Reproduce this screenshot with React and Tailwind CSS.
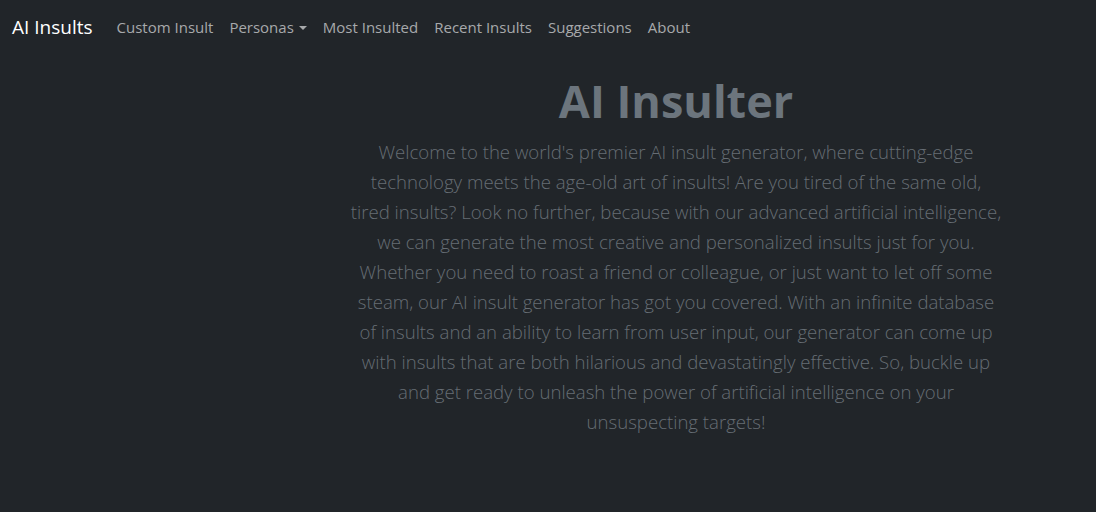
import React from 'react';

const links = ['Custom Insult', 'Personas', 'Most Insulted', 'Recent Insults', 'Suggestions', 'About'];

const lines = [
    "Welcome to the world's premier AI insult generator, where cutting-edge",
    'technology meets the age-old art of insults! Are you tired of the same old,',
    'tired insults? Look no further, because with our advanced artificial intelligence,',
    'we can generate the most creative and personalized insults just for you.',
    'Whether you need to roast a friend or colleague, or just want to let off some',
    'steam, our AI insult generator has got you covered. With an infinite database',
    'of insults and an ability to learn from user input, our generator can come up',
    'with insults that are both hilarious and devastatingly effective. So, buckle up',
    'and get ready to unleash the power of artificial intelligence on your',
    'unsuspecting targets!',
];

function NavBar() {
    return (
        <nav className="h-[54px] flex items-center px-3">
            <a className="text-[19px] text-white mr-4 py-1">AI Insults</a>
            <ul className="flex items-center">
                {links.map((l) => (
                    <li key={l}>
                        <a className="px-2 text-[15px] text-[#a7a9ab] flex items-center">
                            {l}
                            {l === 'Personas' && (
                                <span className="ml-[5px] mt-[1px] border-x-[4px] border-x-transparent border-t-[4px] border-t-[#a7a9ab]" />
                            )}
                        </a>
                    </li>
                ))}
            </ul>
        </nav>
    );
}

export default function App() {
    return (
        <div className="min-h-[512px] bg-[#212529] font-['Open_Sans','Noto_Sans',sans-serif]">
            <NavBar />
            <main className="flex justify-center pl-[256px] pt-[20px]">
                <div className="text-center">
                    <h1 className="text-[45px] font-bold leading-[1.2] text-[#6c757d] mb-[9px]">AI Insulter</h1>
                    <p className="text-[18.6px] font-light leading-[30px] text-[#666d74]">
                        {lines.map((t, i) => (
                            <React.Fragment key={i}>
                                {t}
                                {i < lines.length - 1 && <br />}
                            </React.Fragment>
                        ))}
                    </p>
                </div>
            </main>
        </div>
    );
}
